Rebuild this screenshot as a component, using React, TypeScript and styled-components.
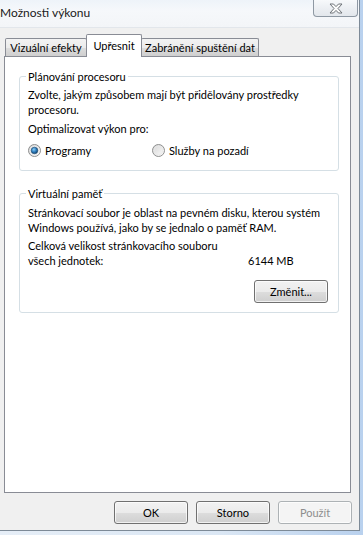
import styled, { createGlobalStyle } from 'styled-components'

const GlobalStyle = createGlobalStyle`
  html, body {
    margin: 0;
    padding: 0;
  }
  body {
    font-family: Lato, "Liberation Sans", sans-serif;
    font-size: 11px;
    color: #000;
  }
`

const Screen = styled.div`
  width: 363px;
  height: 535px;
  overflow: hidden;
  background: linear-gradient(90deg, #e6eef7 0%, #dbe7f4 60%, #b9d1ee 100%);
`

const Window = styled.div`
  width: 360px;
  height: 531px;
  display: flex;
  flex-direction: column;
  border-right: 1px solid #7d8a97;
  border-bottom: 1px solid #7d8a97;
  box-sizing: border-box;
`

const TitleBar = styled.div`
  height: 28px;
  flex: none;
  display: flex;
  justify-content: space-between;
  align-items: flex-start;
  background: linear-gradient(180deg, #eef3f9 0%, #f6f8fb 40%, #f3f5f8 100%);
  border-bottom: 1px solid #e2e6eb;
  box-sizing: border-box;
`

const Title = styled.div`
  padding-top: 5px;
  font-size: 12px;
  line-height: 16px;
  color: #1a1a1a;
`

const CloseButton = styled.div`
  width: 45px;
  height: 17px;
  box-sizing: border-box;
  margin-right: 1px;
  border: 1px solid #8e98a3;
  border-top: none;
  border-radius: 0 0 4px 4px;
  background: linear-gradient(180deg, #f7f9fb 0%, #eceff3 50%, #e3e7ec 100%);
  display: flex;
  align-items: center;
  justify-content: center;
`

const Client = styled.div`
  flex: 1;
  display: flex;
  flex-direction: column;
  background: #f0f0f0;
  padding: 6px 7px 6px 4px;
  box-sizing: border-box;
`

const TabStrip = styled.div`
  height: 22px;
  display: flex;
  align-items: flex-end;
  padding-left: 1px;
`

const Tab = styled.div<{ $active?: boolean; $w: number }>`
  width: ${p => p.$w}px;
  height: ${p => (p.$active ? 23 : 18)}px;
  margin-bottom: ${p => (p.$active ? -1 : 0)}px;
  box-sizing: border-box;
  border: 1px solid #898c95;
  border-bottom: none;
  border-radius: 2px 2px 0 0;
  background: ${p => (p.$active ? '#fff' : 'linear-gradient(180deg, #f3f3f3 0%, #ebebeb 50%, #dddddd 51%, #cfcfcf 100%)')};
  display: flex;
  justify-content: center;
  align-items: ${p => (p.$active ? 'flex-start' : 'center')};
  padding-top: ${p => (p.$active ? 3 : 0)}px;
  white-space: nowrap;
  line-height: 15px;
  position: relative;
  z-index: ${p => (p.$active ? 1 : 0)};
  & + & {
    margin-left: -1px;
  }
`

const Panel = styled.div`
  width: 347px;
  height: 437px;
  box-sizing: border-box;
  border: 1px solid #898c95;
  background: #fff;
  padding: 12px 11px 0 14px;
  display: flex;
  flex-direction: column;
  gap: 15px;
`

const Group = styled.fieldset<{ $h: number }>`
  margin: 0;
  height: ${p => p.$h}px;
  box-sizing: border-box;
  border: 1px solid #d5dfe5;
  border-radius: 3px;
  padding: 3px 10px 0 8px;
  min-width: 0;
`

const Legend = styled.legend`
  padding: 0 2px;
  margin-left: -2px;
  line-height: 15px;
`

const Line = styled.div<{ $gap?: number }>`
  line-height: 15px;
  margin-top: ${p => p.$gap ?? 0}px;
  white-space: nowrap;
`

const RadioRow = styled.div`
  display: flex;
  margin-top: 7px;
  height: 15px;
  align-items: center;
`

const RadioOption = styled.label<{ $w: number }>`
  width: ${p => p.$w}px;
  display: flex;
  align-items: center;
  gap: 4px;
  line-height: 15px;
`

const SizeGrid = styled.div`
  display: grid;
  grid-template-columns: 220px auto;
  align-items: end;
  margin-top: 3px;
  line-height: 15px;
  white-space: nowrap;
`

const ButtonRight = styled.div`
  display: flex;
  justify-content: flex-end;
  margin-top: 12px;
`

const Button = styled.button<{ $disabled?: boolean }>`
  width: 74px;
  height: 23px;
  box-sizing: border-box;
  border: 1px solid ${p => (p.$disabled ? '#adb2b5' : '#707070')};
  border-radius: 3px;
  background: ${p =>
    p.$disabled
      ? '#f4f4f4'
      : 'linear-gradient(180deg, #f2f2f2 0%, #ebebeb 50%, #dddddd 51%, #cfcfcf 100%)'};
  color: ${p => (p.$disabled ? '#8d8d8d' : '#000')};
  font-family: inherit;
  font-size: 11px;
  padding: 0;
  box-shadow: inset 0 0 0 1px rgba(255, 255, 255, 0.7);
`

const ButtonRow = styled.div`
  display: flex;
  justify-content: flex-end;
  gap: 8px;
  margin-top: 8px;
`

function Radio({ checked }: { checked?: boolean }) {
  return (
    <svg width="13" height="13" viewBox="0 0 13 13">
      <defs>
        <linearGradient id="rbg" x1="0" y1="0" x2="1" y2="1">
          <stop offset="0" stopColor="#d4d4d4" />
          <stop offset="1" stopColor="#fdfdfd" />
        </linearGradient>
        <radialGradient id="rdot" cx="0.4" cy="0.35" r="0.7">
          <stop offset="0" stopColor="#8fd0f5" />
          <stop offset="0.5" stopColor="#2f7fc0" />
          <stop offset="1" stopColor="#0f3c63" />
        </radialGradient>
      </defs>
      <circle cx="6.5" cy="6.5" r="6" fill="url(#rbg)" stroke="#8e8f8f" />
      <circle cx="6.5" cy="6.5" r="4.3" fill="none" stroke="#e8e8e8" strokeWidth="0.8" />
      {checked && <circle cx="6.5" cy="6.5" r="3.3" fill="url(#rdot)" stroke="#1b4a72" strokeWidth="0.6" />}
    </svg>
  )
}

function CloseGlyph() {
  return (
    <svg width="14" height="11" viewBox="0 0 14 11">
      <path
        d="M1 1 H4.5 L7 3.6 L9.5 1 H13 L9 5.5 L13 10 H9.5 L7 7.4 L4.5 10 H1 L5 5.5 Z"
        fill="#fbfbfb"
        stroke="#6e7378"
        strokeWidth="1"
        strokeLinejoin="round"
      />
    </svg>
  )
}

export default function App(): JSX.Element {
  return (
    <Screen>
      <GlobalStyle />
      <Window>
        <TitleBar>
          <Title>Možnosti výkonu</Title>
          <CloseButton>
            <CloseGlyph />
          </CloseButton>
        </TitleBar>
        <Client>
          <TabStrip>
            <Tab $w={82}>Vizuální efekty</Tab>
            <Tab $w={56} $active>Upřesnit</Tab>
            <Tab $w={118}>Zabránění spuštění dat</Tab>
          </TabStrip>
          <Panel>
            <Group $h={102}>
              <Legend>Plánování procesoru</Legend>
              <Line>Zvolte, jakým způsobem mají být přidělovány prostředky</Line>
              <Line>procesoru.</Line>
              <Line $gap={4}>Optimalizovat výkon pro:</Line>
              <RadioRow>
                <RadioOption $w={124}>
                  <Radio checked />
                  Programy
                </RadioOption>
                <RadioOption $w={150}>
                  <Radio />
                  Služby na pozadí
                </RadioOption>
              </RadioRow>
            </Group>
            <Group $h={127}>
              <Legend>Virtuální paměť</Legend>
              <Line $gap={1}>Stránkovací soubor je oblast na pevném disku, kterou systém</Line>
              <Line>Windows používá, jako by se jednalo o paměť RAM.</Line>
              <SizeGrid>
                <div>
                  Celková velikost stránkovacího souboru
                  <br />
                  všech jednotek:
                </div>
                <div>6144 MB</div>
              </SizeGrid>
              <ButtonRight>
                <Button>Změnit...</Button>
              </ButtonRight>
            </Group>
          </Panel>
          <ButtonRow>
            <Button>OK</Button>
            <Button>Storno</Button>
            <Button $disabled>Použít</Button>
          </ButtonRow>
        </Client>
      </Window>
    </Screen>
  )
}
